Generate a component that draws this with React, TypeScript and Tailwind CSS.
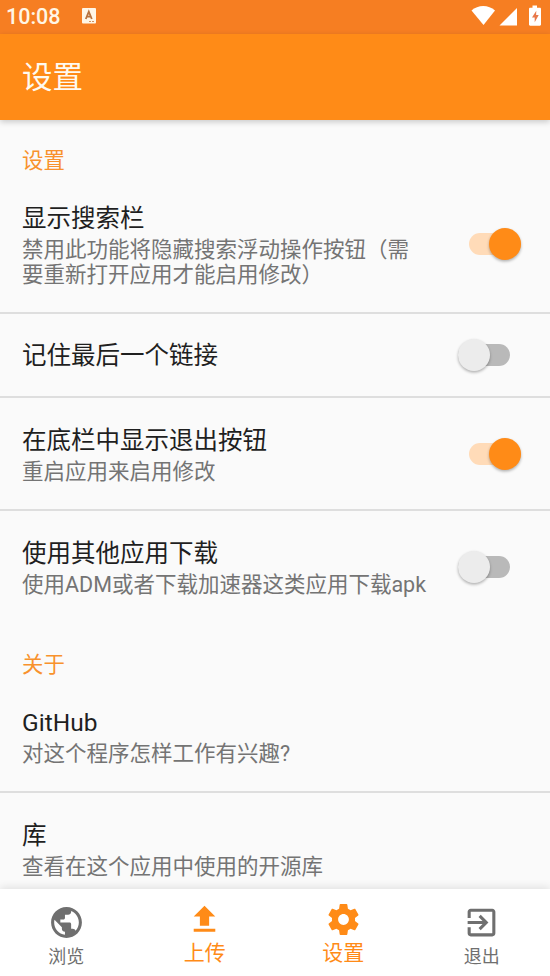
import { useState } from 'react'
import type { ReactNode } from 'react'
import clsx from 'clsx'

const ICONS = {
  browse:
    'M12 2C6.48 2 2 6.48 2 12s4.48 10 10 10 10-4.48 10-10S17.52 2 12 2zm-1 17.93c-3.95-.49-7-3.85-7-7.93 0-.62.08-1.21.21-1.79L9 15v1c0 1.1.9 2 2 2v1.93zm6.9-2.54c-.26-.81-1-1.39-1.9-1.39h-1v-3c0-.55-.45-1-1-1H8v-2h2c.55 0 1-.45 1-1V7h2c1.1 0 2-.9 2-2v-.41c2.93 1.19 5 4.06 5 7.41 0 2.08-.8 3.97-2.1 5.39z',
  upload: 'M9 16h6v-6h4l-7-7-7 7h4zm-4 2h14v2H5z',
  settings:
    'M19.43 12.98c.04-.32.07-.64.07-.98s-.03-.66-.07-.98l2.11-1.65c.19-.15.24-.42.12-.64l-2-3.46c-.12-.22-.39-.3-.61-.22l-2.49 1c-.52-.4-1.08-.73-1.69-.98l-.38-2.65C14.46 2.18 14.25 2 14 2h-4c-.25 0-.46.18-.49.42l-.38 2.65c-.61.25-1.17.59-1.69.98l-2.49-1c-.23-.09-.49 0-.61.22l-2 3.46c-.13.22-.07.49.12.64l2.11 1.65c-.04.32-.07.65-.07.98s.03.66.07.98l-2.11 1.65c-.19.15-.24.42-.12.64l2 3.46c.12.22.39.3.61.22l2.49-1c.52.4 1.08.73 1.69.98l.38 2.65c.03.24.24.42.49.42h4c.25 0 .46-.18.49-.42l.38-2.65c.61-.25 1.17-.59 1.69-.98l2.49 1c.23.09.49 0 .61-.22l2-3.46c.12-.22.07-.49-.12-.64l-2.11-1.65zM12 15.5c-1.93 0-3.5-1.57-3.5-3.5s1.57-3.5 3.5-3.5 3.5 1.57 3.5 3.5-1.57 3.5-3.5 3.5z',
  exit: 'M10.09 15.59L11.5 17l5-5-5-5-1.41 1.41L12.67 11H3v2h9.67l-2.58 2.59zM19 3H5c-1.11 0-2 .9-2 2v4h2V5h14v14H5v-4H3v4c0 1.1.89 2 2 2h14c1.1 0 2-.9 2-2V5c0-1.1-.9-2-2-2z',
}

function StatusBar() {
  return (
    <div className="flex h-[34px] shrink-0 items-center bg-[#f67e22] pl-[6px] pr-2 text-[#fff6e6]">
      <span className="w-[76px] text-[21.5px] font-medium leading-none">10:08</span>
      <svg width="14" height="16" viewBox="0 0 14 16" className="mb-[2px] shrink-0">
        <rect width="14" height="15.5" rx="1" fill="currentColor" />
        <path d="M3.8 11 6.8 3.6 9.8 11M4.8 8.6h4" fill="none" stroke="#b9743f" strokeWidth="1.8" />
        <path d="M7 13.5h6" stroke="#c9793c" strokeWidth="0.8" strokeDasharray="2 1" />
      </svg>
      <svg width="71" height="22" viewBox="0 0 71 22" className="mb-[3px] ml-auto shrink-0" fill="#fff">
        <path d="M.5 5.500C7-.5 17.500-.5 24 5.500L12.500 20z" />
        <path d="M28.500 20.500 46 3V20.500z" />
        <path d="M61.500.5h4.500v2.200h2.800c.7 0 1.200.5 1.200 1.200v15.600c0 .7-.5 1.200-1.200 1.200h-9.600c-.7 0-1.200-.5-1.200-1.200V3.900c0-.7.5-1.200 1.200-1.200h2.300z" />
        <path d="M65.300 5.700 61 12.500h2.700v4.700l4-7.200h-2.600z" fill="#e8784a" />
      </svg>
    </div>
  )
}

function Switch({ on, onToggle }: { on: boolean; onToggle: () => void }) {
  return (
    <button
      role="switch"
      aria-checked={on}
      onClick={onToggle}
      className={clsx('ml-auto flex h-8 w-[52px] shrink-0 items-center', on ? 'mr-[29px]' : 'mr-10')}
    >
      <span className={clsx('flex h-[22px] w-full items-center rounded-full', on ? 'justify-end bg-[#ffdbb8]' : 'bg-[#b9b9b9]')}>
        <span
          className={clsx(
            'size-8 shrink-0 rounded-full shadow-[0_1.500px_3px_rgba(0,0,0,0.3)]',
            on ? 'bg-[#ff8b17]' : 'bg-[#ececec]',
          )}
        />
      </span>
    </button>
  )
}

type RowProps = {
  title: string
  summary?: string
  last?: boolean
  children?: ReactNode
}

function Row({ title, summary, last, children }: RowProps) {
  return (
    <div
      className={clsx(
        'flex shrink-0 items-center pl-[22px]',
        summary ? 'py-[25px]' : 'py-[23px]',
        !last && 'border-b-2 border-[#dedede]',
      )}
    >
      <div className="w-[408px] shrink-0">
        <div className={clsx('text-[24.500px] text-[#1f1f1f]', summary ? 'leading-[35px]' : 'pt-[2px] leading-[34px]')}>{title}</div>
        {summary && <div className="mt-px w-[405px] text-[21.500px] leading-[25px] text-[#747474]">{summary}</div>}
      </div>
      {children}
    </div>
  )
}

function SectionHeader({ children }: { children: ReactNode }) {
  return <div className="shrink-0 pl-[22px] pt-[26px] text-[21.400px] leading-[30px] text-[#f8922d]">{children}</div>
}

function NavItem({ icon, label, active }: { icon: string; label: string; active?: boolean }) {
  return (
    <button
      className={clsx(
        'flex flex-1 flex-col items-center',
        active ? 'pt-3 text-[#ff8b17]' : 'pt-[15px] text-[#6f6f6f]',
      )}
    >
      <svg width="37" height="37" viewBox="0 0 24 24" fill="currentColor">
        <path d={icon} />
      </svg>
      <span className={active ? 'text-[21px] leading-[30px]' : 'text-[18px] leading-[31px]'}>{label}</span>
    </button>
  )
}

export default function App() {
  const [prefs, setPrefs] = useState({ search: true, remember: false, logout: true, download: false })
  const toggle = (key: keyof typeof prefs) => setPrefs((p) => ({ ...p, [key]: !p[key] }))

  return (
    <div className="flex h-[976px] w-[550px] flex-col overflow-hidden bg-[#fafafa] font-[Roboto,'Noto_Sans_CJK_SC',sans-serif]">
      <StatusBar />
      <header className="relative flex h-[86px] shrink-0 items-center bg-[#ff8b17] pl-[22px] pt-[2px] text-[30.500px] text-[#fffaf0] shadow-[0_2px_6px_rgba(0,0,0,0.2)]">
        设置
      </header>

      <main className="flex min-h-0 flex-1 flex-col overflow-hidden">
        <SectionHeader>设置</SectionHeader>
        <Row title="显示搜索栏" summary="禁用此功能将隐藏搜索浮动操作按钮（需要重新打开应用才能启用修改）">
          <Switch on={prefs.search} onToggle={() => toggle('search')} />
        </Row>
        <Row title="记住最后一个链接">
          <Switch on={prefs.remember} onToggle={() => toggle('remember')} />
        </Row>
        <Row title="在底栏中显示退出按钮" summary="重启应用来启用修改">
          <Switch on={prefs.logout} onToggle={() => toggle('logout')} />
        </Row>
        <Row title="使用其他应用下载" summary="使用ADM或者下载加速器这类应用下载apk" last>
          <Switch on={prefs.download} onToggle={() => toggle('download')} />
        </Row>

        <div className="pt-[2px]">
          <SectionHeader>关于</SectionHeader>
        </div>
        <Row title="GitHub" summary="对这个程序怎样工作有兴趣?" />
        <Row title="库" summary="查看在这个应用中使用的开源库" last />
      </main>

      <nav className="relative h-[87px] shrink-0 bg-white shadow-[0_-2px_8px_rgba(0,0,0,0.1)]">
        <div className="-ml-[3px] flex w-[554px]">
          <NavItem icon={ICONS.browse} label="浏览" />
          <NavItem icon={ICONS.upload} label="上传" active />
          <NavItem icon={ICONS.settings} label="设置" active />
          <NavItem icon={ICONS.exit} label="退出" />
        </div>
      </nav>
    </div>
  )
}
